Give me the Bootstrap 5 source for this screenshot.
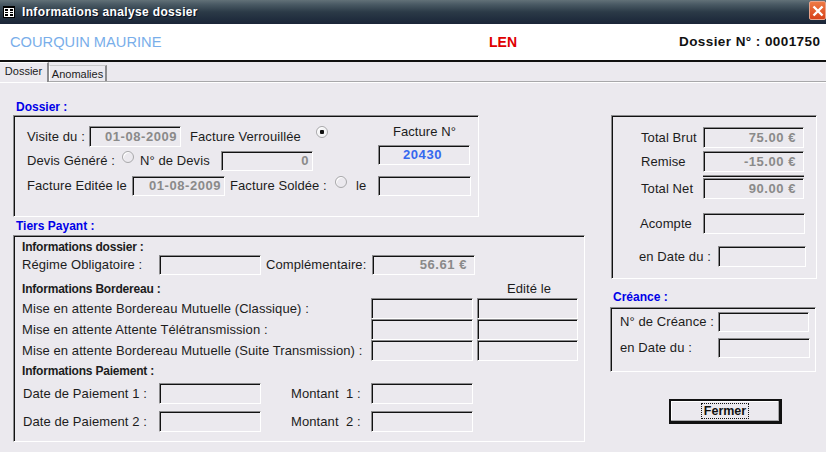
<!DOCTYPE html>
<html lang="fr">
<head>
<meta charset="utf-8">
<title>Informations analyse dossier</title>
<link href="https://cdn.jsdelivr.net/npm/bootstrap@5.3.0/dist/css/bootstrap.min.css" rel="stylesheet">
<style>
html,body{margin:0;width:826px;height:452px;overflow:hidden;background:#ebe9ee;}
body{font-family:"Liberation Sans",Arial,sans-serif;font-size:13px;line-height:14px;letter-spacing:.09px;color:#1c1c1c;}
.title-strip{height:24px;background:linear-gradient(#627178 0,#4a5a64 18%,#2b3a47 50%,#1a2538 100%);color:#fff;font-weight:700;font-size:12px;letter-spacing:.35px;text-shadow:1px 1px 0 #0b1020;}
.title-icon{margin:0 7px 0 3px;}
.title-close{width:17px;height:19px;margin-top:-3px;background:linear-gradient(#ee7a45,#d8431a);border:1px solid #e9a48c;border-radius:2px;}
.head-strip{height:38px;background:#fff;border-bottom:2px solid #111;padding:0 5px 0 10px;}
.pat-name{width:479px;font-size:14.67px;letter-spacing:0;color:#79aeea;}
.pat-code{width:190px;font-size:14px;font-weight:700;letter-spacing:0;color:#e00000;}
.pat-doss{font-size:13.5px;font-weight:700;color:#111;letter-spacing:.42px;}
.nav.xp-tabs{height:20px;border-bottom:1px solid #a8a8aa;box-shadow:0 1px 0 #fff;}
.xp-tabs .nav-link{padding:0;color:#1c1c1c;font-size:11px;line-height:16px;border-radius:0;margin:0;text-align:center;background:#ebe9ee;letter-spacing:0;}
.xp-tabs .nav-link.active{width:49px;height:20px;line-height:17px;color:#1c1c1c;background:#ebe9ee;border:0;border-top:1px solid #fff;border-right:2px solid #8c8c8e;}
.xp-tabs .nav-link.tab-off{width:58px;height:16px;margin-top:3px;border:0;border-top:1px solid #c8c8ca;border-left:1px solid #fff;border-right:2px solid #8c8c8e;}
.tab-body{padding-left:13px;}
.left-side{width:572px;}
.right-side{width:207px;margin-left:25px;margin-top:33px;}
.legend-a,.legend-b,.legend-c{color:#0000e8;font-weight:700;font-size:12px;letter-spacing:0;margin-left:3px;}
.legend-a{margin-top:18px;line-height:15px;height:15px;}
.legend-b{line-height:18px;height:18px;}
.legend-c{margin-top:11px;margin-bottom:3px;}
.xp-group{border:1px solid;border-color:#8b8b8d #fff #fff #8b8b8d;box-shadow:inset 1px 1px 0 #111;}
.grp-doss{width:466px;height:102px;padding:10px 0 0 13px;}
.grp-tiers{width:572px;height:207px;padding:4px 0 0 8px;}
.grp-total{width:206px;height:164px;margin-left:1px;padding:11px 0 0 27px;}
.grp-cre{width:206px;height:65px;padding:4px 0 0 9px;}
.xp-field{border:1px solid;border-color:#8b8b8d #fff #fff #8b8b8d;box-shadow:inset 1px 1px 0 #111;background:#ebe9ee;height:21px;flex:none;font-weight:700;color:#8a8a8a;letter-spacing:.55px;padding:0 3px 0 0;}
.h20{height:20px;}
.fld-92{width:92px;}.fld-93{width:93px;}.fld-102{width:102px;}.fld-101{width:101px;}.fld-103{width:103px;}.fld-88{width:88px;}.fld-91{width:91px;}
.f-pad{padding-right:7px;}
.num-blue{color:#3568ee;}
.xp-radio{appearance:none;width:12px;height:12px;flex:none;margin:0;border:1px solid #a8a8aa;border-radius:50%;background:#ebe9ee;box-shadow:inset 1px 1px 0 #fff;align-self:flex-start;}
.xp-radio:checked{background:radial-gradient(circle,#111 0 2px,#f4f4f6 2.5px);}
.col-left-doss{width:351px;}
.col-right-doss{width:93px;}
.lab-fn{height:19px;line-height:11px;text-align:center;}
.mt-a{margin-top:1px;}.mt-b{margin-top:3px;}.mt-c{margin-top:4px;}.mt-d{margin-top:5px;}.mt-e{margin-top:6px;}.mt-f{margin-top:7px;}.mt-g{margin-top:11px;}.mt-h{margin-top:12px;}.mt-i{margin-top:14px;}.mt-j{margin-top:2px;}
.lw-62{width:62px;}.lw-95{width:95px;}.lw-105{width:105px;}.lw-126{width:126px;}.lw-137{width:137px;}.lw-349{width:349px;}.lw-136{width:136px;margin-left:1px;}.lw-80{width:80px;margin-left:30px;}.lw-106{width:106px;}.lw-485{width:485px;}.lw-81{width:81px;}.lw-98{width:98px;}.lw-64{width:62px;margin-left:2px;}.lw-63{width:63px;margin-left:1px;}.lw-79{width:79px;}
.gap-9{margin-left:9px;}.gap-5{margin-left:5px;}.gap-4{margin-left:4px;}.gap-6{margin-left:6px;}
.sep-line{width:101px;height:2px;margin:3px 0 1px 64px;border-top:1px solid #8b8b8d;border-bottom:1px solid #111;}
.sub-head{height:14px;font-size:12px;font-weight:700;letter-spacing:-.2px;}
.xp-close-btn{display:block;width:113px;height:25px;margin:27px 0 0 59px;padding:0;background:#ebe9ee;border:2px solid #111;border-right-width:3px;border-bottom-width:3px;border-radius:0;font-size:12.5px;font-weight:700;line-height:14px;color:#111;box-shadow:inset -1px -1px 0 #a8a8aa,inset 1px 1px 0 #fff;}
.btn-cap{display:inline-block;border:1px dotted #111;padding:0 2px;}
</style>
</head>
<body>
<div class="title-strip d-flex align-items-center">
  <svg class="title-icon" width="12" height="12" viewBox="0 0 12 12" aria-hidden="true"><rect width="12" height="12" fill="#000"/><rect x="1" y="2" width="10" height="9" fill="#fff"/><path d="M2 3h3v2H2zM7 3h3v2H7zM2 6h3v1H2zM7 6h3v1H7zM2 8h3v2H2zM7 8h3v2H7z" fill="#000"/></svg>
  <span class="flex-grow-1">Informations analyse dossier</span>
  <div class="title-close d-flex align-items-center justify-content-center"><svg width="12" height="12" viewBox="0 0 12 12" aria-hidden="true"><path d="M1.5 1.5l9 9M10.5 1.5l-9 9" stroke="#fff" stroke-width="2.4" fill="none"/></svg></div>
</div>
<div class="head-strip d-flex align-items-center">
  <div class="pat-name">COURQUIN MAURINE</div>
  <div class="pat-code">LEN</div>
  <div class="pat-doss">Dossier N° : 0001750</div>
</div>
<ul class="nav xp-tabs">
  <li class="nav-item"><a class="nav-link active" href="#">Dossier</a></li>
  <li class="nav-item"><a class="nav-link tab-off" href="#">Anomalies</a></li>
</ul>
<div class="tab-body d-flex">
  <div class="left-side">
    <div class="legend-a">Dossier :</div>
    <div class="xp-group grp-doss d-flex">
      <div class="col-left-doss">
        <div class="d-flex align-items-center">
          <div class="lw-62">Visite du :</div>
          <div class="xp-field fld-92 d-flex align-items-center justify-content-end">01-08-2009</div>
          <div class="gap-9 lw-126">Facture Verrouillée</div>
          <input class="xp-radio" type="radio" checked aria-label="Facture Verrouillée">
        </div>
        <div class="d-flex align-items-center mt-c">
          <div class="lw-95">Devis Généré :</div>
          <input class="xp-radio" type="radio" aria-label="Devis Généré">
          <div class="gap-6 lw-81">N° de Devis</div>
          <div class="xp-field fld-92 h20 d-flex align-items-center justify-content-end">0</div>
        </div>
        <div class="d-flex align-items-center mt-d">
          <div class="lw-105">Facture Editée le</div>
          <div class="xp-field fld-93 h20 d-flex align-items-center justify-content-end">01-08-2009</div>
          <div class="gap-5 lw-105">Facture Soldée :</div>
          <input class="xp-radio" type="radio" aria-label="Facture Soldée">
          <div class="gap-9">le</div>
        </div>
      </div>
      <div class="col-right-doss">
        <div class="lab-fn">Facture N°</div>
        <div class="xp-field fld-92 h20 num-blue d-flex align-items-center justify-content-center">20430</div>
        <div class="xp-field fld-93 h20 mt-g"></div>
      </div>
    </div>
    <div class="legend-b">Tiers Payant :</div>
    <div class="xp-group grp-tiers">
      <div class="sub-head">Informations dossier :</div>
      <div class="d-flex align-items-center mt-a">
        <div class="lw-137">Régime Obligatoire :</div>
        <div class="xp-field fld-102 h20"></div>
        <div class="gap-5 lw-106">Complémentaire:</div>
        <div class="xp-field fld-103 h20 f-pad d-flex align-items-center justify-content-end">56.61 €</div>
      </div>
      <div class="d-flex mt-f">
        <div class="sub-head lw-485">Informations Bordereau :</div>
        <div>Edité le</div>
      </div>
      <div class="d-flex align-items-center mt-j">
        <div class="lw-349">Mise en attente Bordereau Mutuelle (Classique) :</div>
        <div class="xp-field fld-102"></div>
        <div class="xp-field fld-101 gap-4"></div>
      </div>
      <div class="d-flex align-items-center">
        <div class="lw-349">Mise en attente Attente Télétransmission :</div>
        <div class="xp-field fld-102"></div>
        <div class="xp-field fld-101 gap-4"></div>
      </div>
      <div class="d-flex align-items-center">
        <div class="lw-349">Mise en attente Bordereau Mutuelle (Suite Transmission) :</div>
        <div class="xp-field fld-102"></div>
        <div class="xp-field fld-101 gap-4"></div>
      </div>
      <div class="sub-head mt-b">Informations Paiement :</div>
      <div class="d-flex align-items-center mt-d">
        <div class="lw-136">Date de Paiement 1 :</div>
        <div class="xp-field fld-102"></div>
        <div class="lw-80">Montant&nbsp; 1 :</div>
        <div class="xp-field fld-102"></div>
      </div>
      <div class="d-flex align-items-center mt-f">
        <div class="lw-136">Date de Paiement 2 :</div>
        <div class="xp-field fld-102"></div>
        <div class="lw-80">Montant&nbsp; 2 :</div>
        <div class="xp-field fld-102"></div>
      </div>
    </div>
  </div>
  <div class="right-side">
    <div class="xp-group grp-total">
      <div class="d-flex align-items-center">
        <div class="lw-64">Total Brut</div>
        <div class="xp-field fld-101 f-pad d-flex align-items-center justify-content-end">75.00 €</div>
      </div>
      <div class="d-flex align-items-center mt-b">
        <div class="lw-64">Remise</div>
        <div class="xp-field fld-101 f-pad d-flex align-items-center justify-content-end">-15.00 €</div>
      </div>
      <div class="sep-line"></div>
      <div class="d-flex align-items-center">
        <div class="lw-64">Total Net</div>
        <div class="xp-field fld-101 f-pad d-flex align-items-center justify-content-end">90.00 €</div>
      </div>
      <div class="d-flex align-items-center mt-i">
        <div class="lw-63">Acompte</div>
        <div class="xp-field fld-102"></div>
      </div>
      <div class="d-flex align-items-center mt-h">
        <div class="lw-79">en Date du :</div>
        <div class="xp-field fld-88"></div>
      </div>
    </div>
    <div class="legend-c">Créance :</div>
    <div class="xp-group grp-cre">
      <div class="d-flex align-items-center">
        <div class="lw-98">N° de Créance :</div>
        <div class="xp-field fld-91 h20"></div>
      </div>
      <div class="d-flex align-items-center mt-e">
        <div class="lw-98">en Date du :</div>
        <div class="xp-field fld-92 h20"></div>
      </div>
    </div>
    <button type="button" class="btn xp-close-btn"><span class="btn-cap">Fermer</span></button>
  </div>
</div>
</body>
</html>
